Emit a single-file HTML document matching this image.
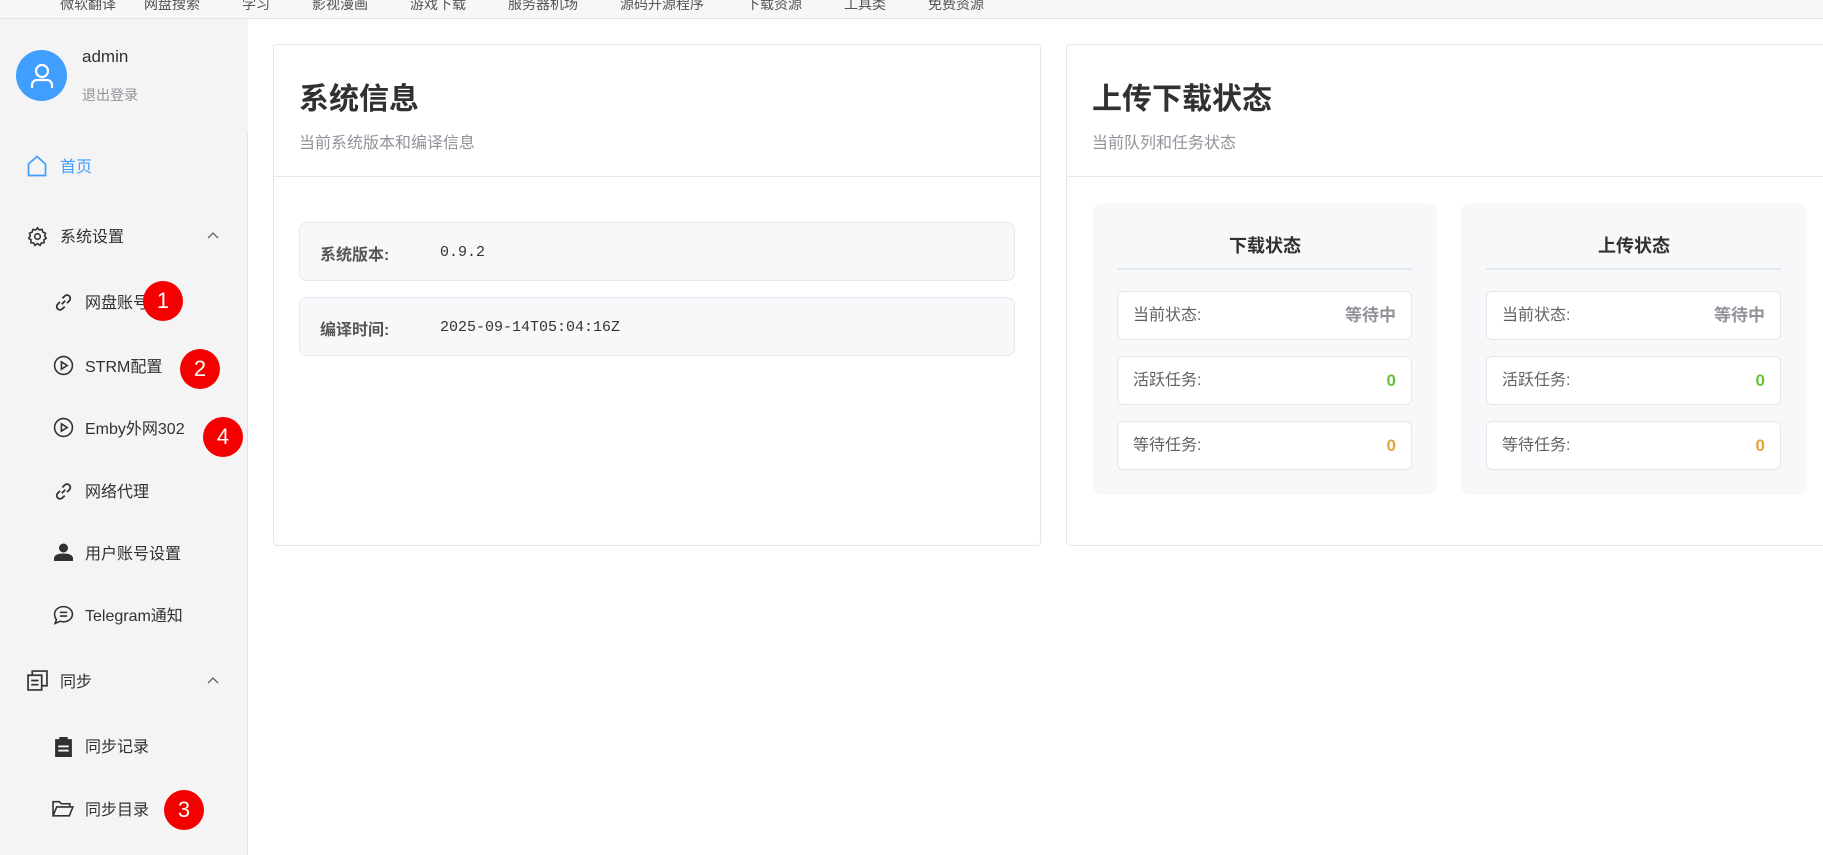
<!DOCTYPE html>
<html><head><meta charset="utf-8"><style>
*{margin:0;padding:0;box-sizing:border-box}
body{width:1823px;height:855px;overflow:hidden;background:#fff;font-family:"Liberation Sans","Noto Sans CJK SC",sans-serif;position:relative;color:#303133}
.a{position:absolute}
.bar{left:0;top:0;width:1823px;height:19px;background:#f7f7f7;border-bottom:1px solid #e3e3e3;font-size:14px;color:#555;line-height:8px;white-space:nowrap;overflow:hidden}
.side{left:0;top:19px;width:248px;height:836px;background:#f4f4f5}
.sideb{left:247px;top:134px;width:1px;height:721px;background:#e0e0e0}
.mi{font-size:16px;color:#303133;line-height:20px}
.badge{position:absolute;width:40px;height:40px;border-radius:50%;background:#f40000;color:#fff;font-size:22px;text-align:center;line-height:40px}
.card{border:1px solid #e4e7ed;border-radius:4px;background:#fff}
.ttl{font-size:30px;font-weight:bold;color:#303133}
.sub{font-size:16px;color:#909399}
.row{background:#f7f8fa;border:1px solid #e4e7ed;border-radius:8px}
.lab{font-size:16px;font-weight:bold;color:#555}
.val{font-family:"Liberation Mono",monospace;font-size:15px;color:#333}
.pan{background:#f7f8fa;border-radius:10px}
.pt{font-size:18px;font-weight:bold;text-align:center;color:#303133}
.pr{background:#fff;border:1px solid #e4e7ed;border-radius:6px;height:49px;font-size:16px;color:#606266;line-height:47px;padding:0 15px 0 15px}
.pr b{float:right;font-size:17px}
</style></head><body>
<div class="a bar"><span style="margin-left:60px">微软翻译　　网盘搜索　　　学习　　　影视漫画　　　游戏下载　　　服务器机场　　　源码开源程序　　　下载资源　　　工具类　　　免费资源</span></div>
<div class="a side"></div>
<div class="a sideb"></div>
<div class="a" style="left:16px;top:50px;width:51px;height:51px;border-radius:50%;background:#409eff"></div>
<svg class="a" style="left:29px;top:62px" width="26" height="28" viewBox="0 0 26 28" fill="none" stroke="#fff" stroke-width="2.2"><circle cx="13" cy="9" r="6"/><path d="M3 26v-3a5 5 0 0 1 5-5h10a5 5 0 0 1 5 5v3"/></svg>
<div class="a" style="left:82px;top:47px;font-size:17px;color:#303133">admin</div>
<div class="a" style="left:82px;top:85px;font-size:14px;color:#909399">退出登录</div>

<svg class="a" style="left:27px;top:155px" width="20" height="22" viewBox="0 0 20 22" fill="none" stroke="#409eff" stroke-width="1.7"><path d="M1.5 9L10 1.5l8.5 7.5v11.5h-17z"/></svg>
<div class="a mi" style="left:60px;top:158px;color:#409eff">首页</div>

<svg class="a" style="left:27px;top:226px" width="21" height="21" viewBox="0 0 24 24" fill="none" stroke="#303133" stroke-width="1.8"><circle cx="12" cy="12" r="3.2"/><path d="M12 2l2 2.5 3.2-.6 1 3.1 3 1.3-1 3 1.8 2.7-2.6 1.8.2 3.2-3.2.4-1.5 2.8L12 20l-2.9 2.2-1.5-2.8-3.2-.4.2-3.2L2 14l1.8-2.7-1-3 3-1.3 1-3.1 3.2.6z"/></svg>
<div class="a mi" style="left:60px;top:228px">系统设置</div>
<svg class="a" style="left:207px;top:232px" width="12" height="8" viewBox="0 0 12 8" fill="none" stroke="#606266" stroke-width="1.3"><path d="M1 6l5-5 5 5"/></svg>

<svg class="a" style="left:53px;top:292px" width="21" height="21" viewBox="0 0 18 18" fill="none" stroke="#303133" stroke-width="1.5"><path d="M7.5 10.5l3-3M6 8.5L4 10.5a2.8 2.8 0 0 0 4 4l2-2M12 9.5l2-2a2.8 2.8 0 0 0-4-4L8 5.5"/></svg>
<div class="a mi" style="left:85px;top:294px">网盘账号管理</div>
<svg class="a" style="left:53px;top:355px" width="21" height="21" viewBox="0 0 20 20" fill="none" stroke="#303133" stroke-width="1.5"><circle cx="10" cy="10" r="8.5"/><path d="M8 6.5v7l5.5-3.5z"/></svg>
<div class="a mi" style="left:85px;top:358px">STRM配置</div>
<svg class="a" style="left:53px;top:417px" width="21" height="21" viewBox="0 0 20 20" fill="none" stroke="#303133" stroke-width="1.5"><circle cx="10" cy="10" r="8.5"/><path d="M8 6.5v7l5.5-3.5z"/></svg>
<div class="a mi" style="left:85px;top:420px">Emby外网302</div>
<svg class="a" style="left:53px;top:481px" width="21" height="21" viewBox="0 0 18 18" fill="none" stroke="#303133" stroke-width="1.5"><path d="M7.5 10.5l3-3M6 8.5L4 10.5a2.8 2.8 0 0 0 4 4l2-2M12 9.5l2-2a2.8 2.8 0 0 0-4-4L8 5.5"/></svg>
<div class="a mi" style="left:85px;top:483px">网络代理</div>
<svg class="a" style="left:54px;top:543px" width="19" height="18" viewBox="0 0 19 18" fill="#303133"><circle cx="9.5" cy="5" r="4.5"/><path d="M0 18v-2.5C0 12 4 10.5 9.5 10.5S19 12 19 15.5V18z"/></svg>
<div class="a mi" style="left:85px;top:545px">用户账号设置</div>
<svg class="a" style="left:53px;top:605px" width="21" height="20" viewBox="0 0 20 19" fill="none" stroke="#303133" stroke-width="1.5"><path d="M10 1.5c4.7 0 8.5 3.2 8.5 7.2S14.7 16 10 16c-1.2 0-2.3-.2-3.3-.5L2 17.5l1.3-3.6C2.2 12.6 1.5 10.9 1.5 8.7c0-4 3.8-7.2 8.5-7.2zM6.5 7h7M6.5 10.5h7"/></svg>
<div class="a mi" style="left:85px;top:607px">Telegram通知</div>

<svg class="a" style="left:27px;top:670px" width="21" height="21" viewBox="0 0 20 20" fill="none" stroke="#303133" stroke-width="1.6"><path d="M1 5h13v14H1zM5 5V1h14v14h-5M4 10h7M4 14h7"/></svg>
<div class="a mi" style="left:60px;top:673px">同步</div>
<svg class="a" style="left:207px;top:677px" width="12" height="8" viewBox="0 0 12 8" fill="none" stroke="#606266" stroke-width="1.3"><path d="M1 6l5-5 5 5"/></svg>

<svg class="a" style="left:55px;top:736px" width="17" height="21" viewBox="0 0 16 20"><path d="M0 3h4V1h8v2h4v17H0z" fill="#303133"/><rect x="3" y="9" width="10" height="1.8" fill="#f4f4f5"/><rect x="3" y="13" width="10" height="1.8" fill="#f4f4f5"/></svg>
<div class="a mi" style="left:85px;top:738px">同步记录</div>
<svg class="a" style="left:52px;top:800px" width="22" height="18" viewBox="0 0 21 17" fill="none" stroke="#303133" stroke-width="1.5"><path d="M1 15V1.5h6l2 2h8v3M1 15l3.5-8.5H20L16.5 15z"/></svg>
<div class="a mi" style="left:85px;top:801px">同步目录</div>

<div class="badge" style="left:143px;top:281px">1</div>
<div class="badge" style="left:180px;top:349px">2</div>
<div class="badge" style="left:203px;top:417px">4</div>
<div class="badge" style="left:164px;top:790px">3</div>

<div class="a card" style="left:273px;top:44px;width:768px;height:502px"></div>
<div class="a" style="left:274px;top:176px;width:766px;height:1px;background:#e4e7ed"></div>
<div class="a ttl" style="left:299px;top:74px">系统信息</div>
<div class="a sub" style="left:299px;top:129px">当前系统版本和编译信息</div>
<div class="a row" style="left:299px;top:222px;width:716px;height:59px"></div>
<div class="a lab" style="left:320px;top:241px">系统版本:</div>
<div class="a val" style="left:440px;top:244px">0.9.2</div>
<div class="a row" style="left:299px;top:297px;width:716px;height:59px"></div>
<div class="a lab" style="left:320px;top:316px">编译时间:</div>
<div class="a val" style="left:440px;top:319px">2025-09-14T05:04:16Z</div>

<div class="a card" style="left:1066px;top:44px;width:770px;height:502px"></div>
<div class="a" style="left:1067px;top:176px;width:756px;height:1px;background:#e4e7ed"></div>
<div class="a ttl" style="left:1092px;top:74px">上传下载状态</div>
<div class="a sub" style="left:1092px;top:129px">当前队列和任务状态</div>

<div class="a pan" style="left:1093px;top:203px;width:344px;height:292px"></div>
<div class="a pt" style="left:1093px;top:232px;width:344px">下载状态</div>
<div class="a" style="left:1117px;top:268px;width:295px;height:2px;background:#e4e7ed"></div>
<div class="a pr" style="left:1117px;top:291px;width:295px">当前状态:<b style="color:#909399">等待中</b></div>
<div class="a pr" style="left:1117px;top:356px;width:295px">活跃任务:<b style="color:#67c23a">0</b></div>
<div class="a pr" style="left:1117px;top:421px;width:295px">等待任务:<b style="color:#e6a23c">0</b></div>

<div class="a pan" style="left:1461px;top:203px;width:346px;height:292px"></div>
<div class="a pt" style="left:1461px;top:232px;width:346px">上传状态</div>
<div class="a" style="left:1486px;top:268px;width:295px;height:2px;background:#e4e7ed"></div>
<div class="a pr" style="left:1486px;top:291px;width:295px">当前状态:<b style="color:#909399">等待中</b></div>
<div class="a pr" style="left:1486px;top:356px;width:295px">活跃任务:<b style="color:#67c23a">0</b></div>
<div class="a pr" style="left:1486px;top:421px;width:295px">等待任务:<b style="color:#e6a23c">0</b></div>
</body></html>
